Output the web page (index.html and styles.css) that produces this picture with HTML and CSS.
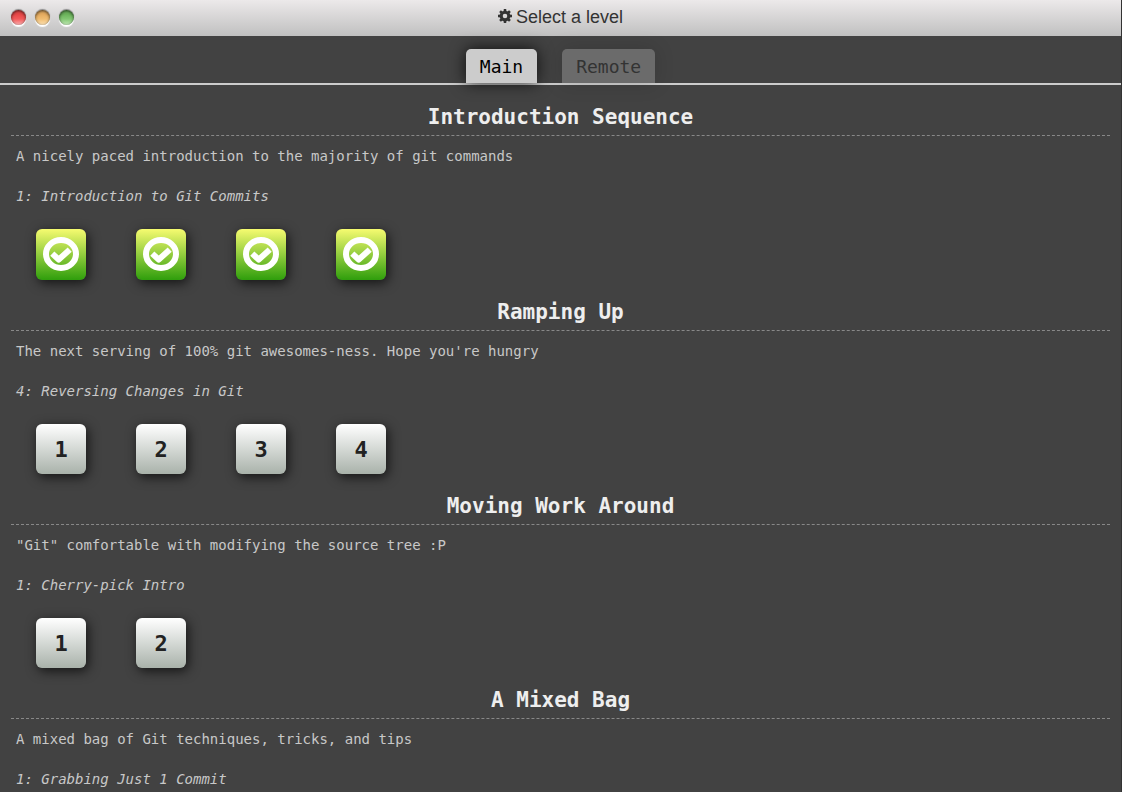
FILE: index.html
```
<!DOCTYPE html>
<html lang="en">
<head>
<meta charset="utf-8">
<title>Select a level</title>
<link rel="stylesheet" href="styles.css">
</head>
<body>
<svg class="defs" aria-hidden="true">
  <symbol id="check" viewBox="0 0 36 34" preserveAspectRatio="none">
    <ellipse cx="18" cy="17" rx="15" ry="14" fill="none" stroke="currentColor" stroke-width="6"/>
    <path d="M9.3 16.6 L15.7 22.6 L26.7 12.6" fill="none" stroke="currentColor" stroke-width="6" stroke-linejoin="round"/>
  </symbol>
</svg>
<div class="window">
  <header class="titlebar">
    <div class="controls">
      <button class="dot red" type="button" aria-label="Close"></button>
      <button class="dot amber" type="button" aria-label="Minimize"></button>
      <button class="dot green" type="button" aria-label="Zoom"></button>
    </div>
    <h1 class="title">
      <svg class="gear" viewBox="0 0 14 14" aria-hidden="true">
        <g fill="currentColor">
          <path fill-rule="evenodd" d="M7 1.7a5.3 5.3 0 1 0 0 10.6a5.3 5.3 0 0 0 0-10.6zM7 4.7a2.3 2.3 0 1 1 0 4.6a2.3 2.3 0 0 1 0-4.6z"/>
          <path id="tooth" d="M5.5 2.8L5.8 0h2.4l.3 2.8z"/>
          <use href="#tooth" transform="rotate(45 7 7)"/>
          <use href="#tooth" transform="rotate(90 7 7)"/>
          <use href="#tooth" transform="rotate(135 7 7)"/>
          <use href="#tooth" transform="rotate(180 7 7)"/>
          <use href="#tooth" transform="rotate(225 7 7)"/>
          <use href="#tooth" transform="rotate(270 7 7)"/>
          <use href="#tooth" transform="rotate(315 7 7)"/>
        </g>
      </svg>
      <span>Select a level</span>
    </h1>
  </header>
  <nav class="tabs">
    <button class="tab selected" type="button">Main</button>
    <button class="tab" type="button">Remote</button>
  </nav>
  <main class="content">
    <section class="series">
      <h2>Introduction Sequence</h2>
      <p class="about">A nicely paced introduction to the majority of git commands</p>
      <p class="current">1: Introduction to Git Commits</p>
      <div class="levels">
        <button class="level solved" type="button" aria-label="Level 1, solved"><svg class="check"><use href="#check"/></svg></button>
        <button class="level solved" type="button" aria-label="Level 2, solved"><svg class="check"><use href="#check"/></svg></button>
        <button class="level solved" type="button" aria-label="Level 3, solved"><svg class="check"><use href="#check"/></svg></button>
        <button class="level solved" type="button" aria-label="Level 4, solved"><svg class="check"><use href="#check"/></svg></button>
      </div>
    </section>
    <section class="series">
      <h2>Ramping Up</h2>
      <p class="about">The next serving of 100% git awesomes-ness. Hope you're hungry</p>
      <p class="current">4: Reversing Changes in Git</p>
      <div class="levels">
        <button class="level" type="button">1</button>
        <button class="level" type="button">2</button>
        <button class="level" type="button">3</button>
        <button class="level" type="button">4</button>
      </div>
    </section>
    <section class="series">
      <h2>Moving Work Around</h2>
      <p class="about">"Git" comfortable with modifying the source tree :P</p>
      <p class="current">1: Cherry-pick Intro</p>
      <div class="levels">
        <button class="level" type="button">1</button>
        <button class="level" type="button">2</button>
      </div>
    </section>
    <section class="series">
      <h2>A Mixed Bag</h2>
      <p class="about">A mixed bag of Git techniques, tricks, and tips</p>
      <p class="current">1: Grabbing Just 1 Commit</p>
    </section>
  </main>
</div>
</body>
</html>
```
FILE: styles.css
```
* {
  box-sizing: border-box;
}

body {
  margin: 0;
  background: #424242;
  font-family: Consolas, "DejaVu Sans Mono", monospace;
  font-size: 14px;
  line-height: 20px;
  color: #c8c8c8;
}

h1, h2, p {
  margin: 0;
}

button {
  border: 0;
  padding: 0;
  font-family: inherit;
}

.defs {
  display: none;
}

.window {
  min-height: 100vh;
  border-right: 1px solid #333;
}

.titlebar {
  display: grid;
  grid-template-columns: 1fr auto 1fr;
  align-items: center;
  height: 36px;
  padding: 0 11px 2px;
  background: linear-gradient(#ece9ea, #c0c0c0);
}

.controls {
  display: flex;
  gap: 9px;
}

.dot {
  width: 15px;
  height: 15px;
  border-radius: 50%;
  box-shadow: 0 2px 1px #fff, 0 -1px 1px #888, inset 0 1px 3px rgba(0, 0, 0, 0.7);
}

.red {
  background: linear-gradient(#e84848 30%, #f25a5a 60%, #ffb4b4);
}

.amber {
  background: linear-gradient(#e6ac60 30%, #f0bc70 60%, #ffe4b8);
}

.green {
  background: linear-gradient(#6cb45c 30%, #82c672 60%, #c4ecb8);
}

.title {
  display: flex;
  align-items: center;
  gap: 4px;
  font: 18px/34px "Liberation Sans", Arial, sans-serif;
  color: #333;
}

.gear {
  width: 14px;
  height: 14px;
  margin-bottom: 2px;
}

.tabs {
  display: flex;
  justify-content: center;
  gap: 25px;
  padding-top: 13px;
  border-bottom: 2px solid #ccc;
}

.tab {
  height: 34px;
  padding: 0 14px;
  border-radius: 5px 5px 0 0;
  background: #6b6b6b;
  box-shadow: 0 0 20px rgba(0, 0, 0, 0.15);
  font-size: 18px;
  color: #333;
}

.tab.selected {
  background: #ccc;
  box-shadow: 0 0 16px rgba(0, 0, 0, 0.8);
  color: #000;
}

.content {
  padding: 0 11px;
}

.series {
  padding-top: 15px;
}

.series h2 {
  border-bottom: 1px dashed #888;
  font-size: 21px;
  line-height: 35px;
  text-align: center;
  color: #eee;
}

.about, .current {
  padding: 0 5px;
}

.about {
  margin: 10px 0 20px;
}

.current {
  font-style: italic;
}

.levels {
  display: flex;
  flex-wrap: wrap;
  gap: 50px;
  margin-top: 23px;
  padding: 0 25px;
}

.level {
  display: grid;
  place-items: center;
  width: 50px;
  height: 50px;
  border-radius: 6px;
  background: linear-gradient(#fff, #a9b2aa);
  box-shadow: 2px 3px 12px rgba(0, 0, 0, 0.7);
  font-size: 22px;
  font-weight: bold;
  color: #222;
}

.level.solved {
  height: 51px;
  padding-bottom: 1px;
  background: linear-gradient(#f6fb70, #2f9e0c);
  color: #fff;
}

.check {
  width: 36px;
  height: 34px;
}
```
